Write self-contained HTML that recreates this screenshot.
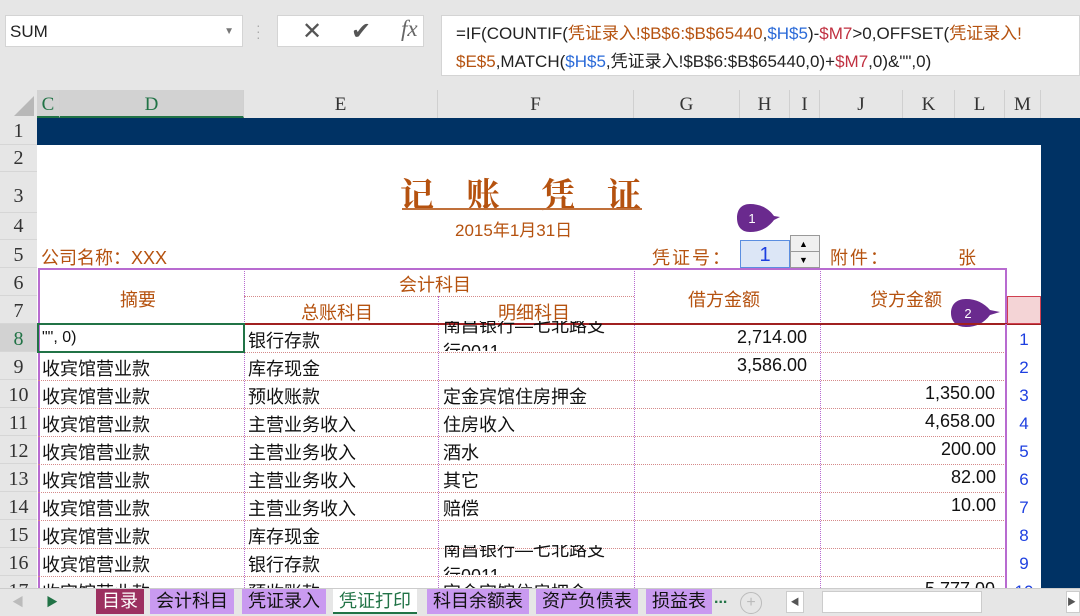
<!DOCTYPE html>
<html><head><meta charset="utf-8"><style>
*{margin:0;padding:0;box-sizing:border-box}
body{width:1080px;height:616px;overflow:hidden;position:relative;background:#fff;font-family:"Liberation Sans","Noto Sans CJK SC",sans-serif}
.a{position:absolute;white-space:nowrap}
.ch{position:absolute;top:90px;height:28px;line-height:30px;text-align:center;font-family:"Liberation Serif",serif;font-size:19px;color:#333;border-right:1px solid #d0d0d0;transform-origin:center}
.rh{position:absolute;left:0;width:37px;text-align:center;font-family:"Liberation Serif",serif;font-size:20px;color:#333;border-bottom:1px solid #d6d6d6;background:#e6e6e6}
.c{position:absolute;font-size:18px;color:#111;white-space:nowrap;font-family:"Liberation Sans","Noto Sans CJK SC",sans-serif}
.o{color:#b5520f}
.n{position:absolute;left:1010px;width:28px;text-align:center;color:#1d3fe0;font-size:17px}
.hd{position:absolute;left:38px;width:968px;border-top:1px dotted #d58a8a}
.vd{position:absolute;border-left:1px dotted #b86bd0;top:268px;height:320px}
.tab{position:absolute;top:589px;height:25px;line-height:25px;font-size:18px;padding:0 6px;background:#c99af0;color:#111}
.t{position:absolute;top:168px;font-size:34px;font-weight:bold;color:#b5520f;font-family:"Noto Serif CJK SC","Noto Sans CJK SC",serif}
</style></head><body>
<div class="a" style="left:0;top:0;width:1080px;height:118px;background:#e6e6e6"></div>
<div class="a" style="left:5px;top:15px;width:238px;height:32px;background:#fff;border:1px solid #d4d4d4;font-size:17px;line-height:31px;padding-left:4px;color:#222">SUM<span style="position:absolute;right:8px;top:0;font-size:10px;color:#777">▼</span></div>
<div class="a" style="left:256px;top:22px;color:#aaa;font-size:14px;line-height:6px">·<br>·<br>·</div>
<div class="a" style="left:277px;top:15px;width:147px;height:32px;background:#fff;border:1px solid #d4d4d4"></div>
<div class="a" style="left:302px;top:17px;font-size:24px;color:#555">✕</div>
<div class="a" style="left:351px;top:17px;font-size:24px;color:#555">✔</div>
<div class="a" style="left:401px;top:16px;font-size:23px;color:#666;font-family:'Liberation Serif',serif;font-style:italic">fx</div>
<div class="a" style="left:441px;top:15px;width:639px;height:61px;background:#fff;border:1px solid #d4d4d4"></div>
<div class="a" style="left:456px;top:20px;font-size:17px;line-height:28px;color:#222">=IF(COUNTIF(<span style="color:#b5520f">凭证录入!$B$6:$B$65440</span>,<span style="color:#2a6ad8">$H$5</span>)-<span style="color:#c03040">$M7</span>&gt;0,OFFSET(<span style="color:#b5520f">凭证录入!</span><br><span style="color:#b5520f">$E$5</span>,MATCH(<span style="color:#2a6ad8">$H$5</span>,凭证录入!$B$6:$B$65440,0)+<span style="color:#c03040">$M7</span>,0)&amp;"",0)</div>
<div class="a" style="left:0;top:90px;width:37px;height:28px;background:#e6e6e6"></div>
<div class="a" style="left:14px;top:96px;width:0;height:0;border-left:20px solid transparent;border-bottom:20px solid #b8b8b8"></div>
<div class="ch" style="left:37px;width:23px;background:#d2d2d2;color:#217346;border-bottom:2px solid #217346">C</div>
<div class="ch" style="left:60px;width:184px;background:#d2d2d2;color:#217346;border-bottom:2px solid #217346">D</div>
<div class="ch" style="left:244px;width:194px">E</div>
<div class="ch" style="left:438px;width:196px">F</div>
<div class="ch" style="left:634px;width:106px">G</div>
<div class="ch" style="left:740px;width:50px">H</div>
<div class="ch" style="left:790px;width:30px">I</div>
<div class="ch" style="left:820px;width:83px">J</div>
<div class="ch" style="left:903px;width:52px">K</div>
<div class="ch" style="left:955px;width:50px">L</div>
<div class="ch" style="left:1005px;width:36px">M</div>
<div class="a" style="left:37px;top:118px;width:1043px;height:27px;background:#003264"></div>
<div class="a" style="left:1041px;top:118px;width:39px;height:472px;background:#003264"></div>
<div class="rh" style="top:118px;height:27px;line-height:27px">1</div>
<div class="rh" style="top:145px;height:27px;line-height:27px">2</div>
<div class="rh" style="top:172px;height:41px;line-height:48px">3</div>
<div class="rh" style="top:213px;height:27px;line-height:27px">4</div>
<div class="rh" style="top:240px;height:28px;line-height:30px">5</div>
<div class="rh" style="top:268px;height:28px;line-height:30px">6</div>
<div class="rh" style="top:296px;height:28px;line-height:30px">7</div>
<div class="rh" style="top:324px;height:28px;line-height:30px;background:#d2d2d2;color:#217346">8</div>
<div class="rh" style="top:352px;height:28px;line-height:30px">9</div>
<div class="rh" style="top:380px;height:28px;line-height:30px">10</div>
<div class="rh" style="top:408px;height:28px;line-height:30px">11</div>
<div class="rh" style="top:436px;height:28px;line-height:30px">12</div>
<div class="rh" style="top:464px;height:28px;line-height:30px">13</div>
<div class="rh" style="top:492px;height:28px;line-height:30px">14</div>
<div class="rh" style="top:520px;height:28px;line-height:30px">15</div>
<div class="rh" style="top:548px;height:28px;line-height:30px">16</div>
<div class="rh" style="top:576px;height:14px;line-height:30px;overflow:hidden">17</div>
<div class="t" style="left:400px">记</div>
<div class="t" style="left:466px">账</div>
<div class="t" style="left:541px">凭</div>
<div class="t" style="left:607px">证</div>
<div class="a" style="left:402px;top:208px;width:240px;border-top:2px solid #c0703a"></div>
<div class="a o" style="left:455px;top:216px;font-size:17px">2015年1月31日</div>
<div class="a o" style="left:41px;top:244px;font-size:18px">公司名称：XXX</div>
<div class="a o" style="left:652px;top:244px;font-size:18px;letter-spacing:2px">凭证号：</div>
<div class="a" style="left:740px;top:240px;width:50px;height:28px;background:#dce6f6;border:1px solid #5b8ee0;color:#1d3fe0;font-size:20px;text-align:center;line-height:28px">1</div>
<div class="a" style="left:790px;top:235px;width:30px;height:33px;background:#f0f0f0;border:1px solid #999"></div>
<div class="a" style="left:791px;top:251px;width:28px;border-top:1px solid #999"></div>
<div class="a" style="left:799px;top:239px;font-size:9px">▲</div>
<div class="a" style="left:799px;top:255px;font-size:9px">▼</div>
<div class="a o" style="left:830px;top:244px;font-size:18px;letter-spacing:2px">附件：</div>
<div class="a o" style="left:958px;top:244px;font-size:18px">张</div>
<!-- callouts -->
<svg class="a" style="left:734px;top:202px" width="50" height="32" viewBox="0 0 50 32"><path d="M16 2 C26 2 34 6 40 14 L46 15 L40 18 C34 26 26 30 16 30 C7 30 3 24 3 16 C3 8 7 2 16 2 Z" fill="#6a2a8e"/><text x="18" y="21" fill="#fff" font-size="13" font-family="Liberation Sans" text-anchor="middle">1</text></svg>
<svg class="a" style="left:948px;top:297px" width="56" height="32" viewBox="0 0 56 32"><path d="M18 2 C28 2 36 6 42 13 L52 15 L42 18 C36 26 28 30 18 30 C8 30 3 24 3 16 C3 8 8 2 18 2 Z" fill="#6a2a8e"/><text x="20" y="21" fill="#fff" font-size="13" font-family="Liberation Sans" text-anchor="middle">2</text></svg>
<div class="a" style="left:38px;top:268px;width:969px;height:330px;border:2px solid #b86bd0;border-bottom:none"></div>
<div class="vd" style="left:244px"></div>
<div class="vd" style="left:438px;top:296px;height:292px"></div>
<div class="vd" style="left:634px"></div>
<div class="vd" style="left:820px"></div>
<div class="a" style="left:244px;top:296px;width:390px;border-top:1px dotted #d58a8a"></div>
<div class="a" style="left:38px;top:323px;width:1003px;border-top:2px solid #a02020"></div>
<div class="hd" style="top:352px"></div><div class="hd" style="top:380px"></div><div class="hd" style="top:408px"></div><div class="hd" style="top:436px"></div><div class="hd" style="top:464px"></div><div class="hd" style="top:492px"></div><div class="hd" style="top:520px"></div><div class="hd" style="top:548px"></div><div class="hd" style="top:576px"></div>
<div class="a" style="left:1007px;top:296px;width:34px;height:28px;background:#f4d4d6;border:1px solid #d04050"></div>
<div class="a" style="left:1005px;top:324px;height:266px;border-left:2px solid #b86bd0"></div>
<div class="c o" style="left:120px;top:286px">摘要</div>
<div class="c o" style="left:399px;top:271px">会计科目</div>
<div class="c o" style="left:301px;top:299px">总账科目</div>
<div class="c o" style="left:498px;top:299px">明细科目</div>
<div class="c o" style="left:688px;top:286px">借方金额</div>
<div class="c o" style="left:870px;top:286px">贷方金额</div>
<div class="a" style="left:37px;top:323px;width:208px;height:30px;border:2px solid #217346"></div>
<div class="c" style="left:42px;top:329px;font-size:16px">"", 0)</div>
<div class="c" style="left:248px;top:327px">银行存款</div>
<div class="c" style="left:443px;top:313px;height:38px;overflow:hidden;line-height:26px;clip-path:inset(8px 0 0 0)">南昌银行—七北路支<br>行0011</div>
<div class="c" style="left:737px;top:327px">2,714.00</div>
<div class="c" style="left:248px;top:355px">库存现金</div><div class="c" style="left:42px;top:355px">收宾馆营业款</div><div class="c" style="left:737px;top:355px">3,586.00</div>
<div class="c" style="left:42px;top:383px">收宾馆营业款</div><div class="c" style="left:248px;top:383px">预收账款</div><div class="c" style="left:443px;top:383px">定金宾馆住房押金</div><div class="c" style="left:925px;top:383px">1,350.00</div>
<div class="c" style="left:42px;top:411px">收宾馆营业款</div><div class="c" style="left:248px;top:411px">主营业务收入</div><div class="c" style="left:443px;top:411px">住房收入</div><div class="c" style="left:925px;top:411px">4,658.00</div>
<div class="c" style="left:42px;top:439px">收宾馆营业款</div><div class="c" style="left:248px;top:439px">主营业务收入</div><div class="c" style="left:443px;top:439px">酒水</div><div class="c" style="left:941px;top:439px">200.00</div>
<div class="c" style="left:42px;top:467px">收宾馆营业款</div><div class="c" style="left:248px;top:467px">主营业务收入</div><div class="c" style="left:443px;top:467px">其它</div><div class="c" style="left:951px;top:467px">82.00</div>
<div class="c" style="left:42px;top:495px">收宾馆营业款</div><div class="c" style="left:248px;top:495px">主营业务收入</div><div class="c" style="left:443px;top:495px">赔偿</div><div class="c" style="left:951px;top:495px">10.00</div>
<div class="c" style="left:42px;top:523px">收宾馆营业款</div><div class="c" style="left:248px;top:523px">库存现金</div>
<div class="c" style="left:42px;top:551px">收宾馆营业款</div><div class="c" style="left:248px;top:551px">银行存款</div><div class="c" style="left:443px;top:537px;height:38px;overflow:hidden;line-height:26px;clip-path:inset(8px 0 0 0)">南昌银行—七北路支<br>行0011</div>
<div class="c" style="left:42px;top:579px">收宾馆营业款</div><div class="c" style="left:248px;top:579px">预收账款</div><div class="c" style="left:443px;top:579px">定金宾馆住房押金</div><div class="c" style="left:925px;top:579px">5,777.00</div>
<div class="n" style="top:330px">1</div><div class="n" style="top:358px">2</div><div class="n" style="top:386px">3</div><div class="n" style="top:414px">4</div><div class="n" style="top:442px">5</div><div class="n" style="top:470px">6</div><div class="n" style="top:498px">7</div><div class="n" style="top:526px">8</div><div class="n" style="top:554px">9</div><div class="n" style="top:582px">10</div>
<div class="a" style="left:0;top:588px;width:1080px;height:28px;background:#e6e6e6;border-top:1px solid #ccc"></div>
<div class="a" style="left:12px;top:593px;color:#bbb;font-size:12px">◀</div>
<div class="a" style="left:46px;top:593px;color:#217346;font-size:12px">▶</div>
<div class="tab" style="left:96px;background:#9c3060;color:#fff">目录</div>
<div class="tab" style="left:150px">会计科目</div>
<div class="tab" style="left:242px">凭证录入</div>
<div class="tab" style="left:333px;background:#fff;color:#217346;border-bottom:2px solid #217346">凭证打印</div>
<div class="tab" style="left:427px">科目余额表</div>
<div class="tab" style="left:536px">资产负债表</div>
<div class="tab" style="left:646px">损益表</div>
<div class="a" style="left:714px;top:590px;color:#217346;font-size:16px;font-weight:bold">...</div>
<div class="a" style="left:740px;top:592px;width:22px;height:22px;border:1px solid #bbb;border-radius:50%;color:#bbb;text-align:center;line-height:20px">+</div>
<div class="a" style="left:786px;top:591px;width:18px;height:22px;background:#fff;border:1px solid #ccc;font-size:9px;line-height:20px;text-align:center;color:#555">◀</div>
<div class="a" style="left:822px;top:591px;width:160px;height:22px;background:#fff;border:1px solid #ccc"></div>
<div class="a" style="left:1066px;top:591px;width:14px;height:22px;background:#fff;border:1px solid #ccc;font-size:9px;line-height:20px;color:#555">▶</div>
</body></html>
